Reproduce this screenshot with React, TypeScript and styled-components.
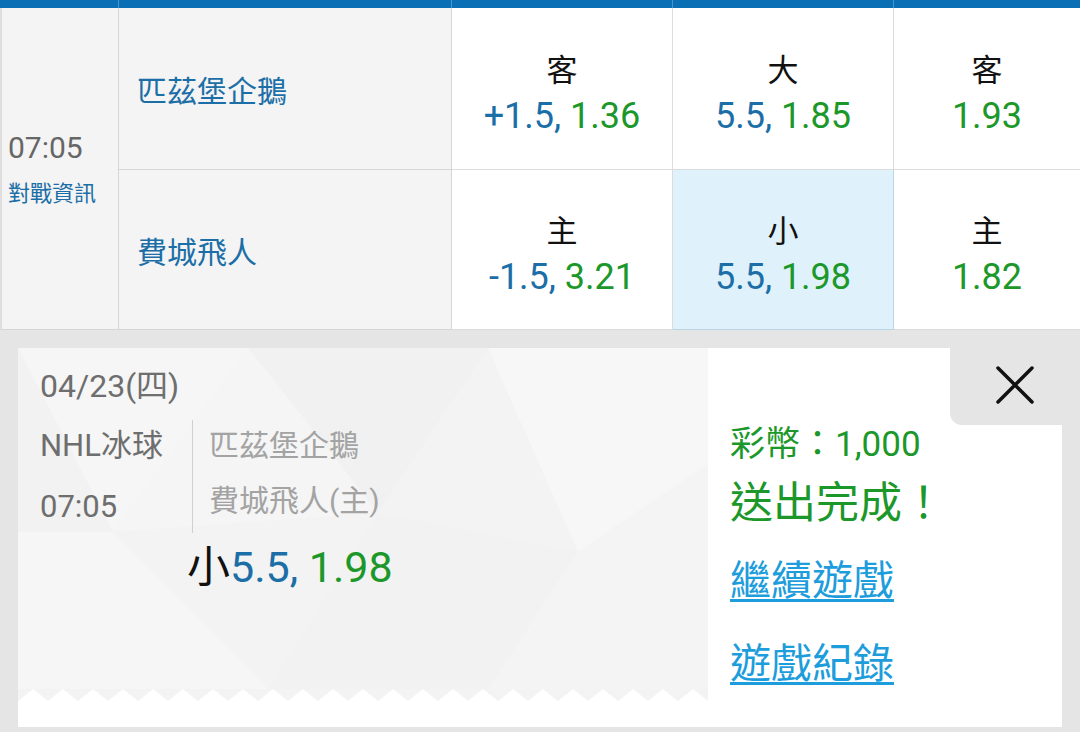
import styled, { createGlobalStyle } from "styled-components";

const GlobalStyle = createGlobalStyle`
  html, body {
    margin: 0;
    padding: 0;
    background: #e5e5e5;
  }
  body {
    width: 1080px;
    height: 732px;
    overflow: hidden;
    font-family: Roboto, "Noto Sans CJK TC", sans-serif;
  }
  * {
    box-sizing: border-box;
  }
`;

interface Odd {
  label: string;
  line?: string;
  price: string;
  active?: boolean;
}

const rows: { team: string; odds: Odd[] }[] = [
  {
    team: "匹茲堡企鵝",
    odds: [
      { label: "客", line: "+1.5", price: "1.36" },
      { label: "大", line: "5.5", price: "1.85" },
      { label: "客", price: "1.93" },
    ],
  },
  {
    team: "費城飛人",
    odds: [
      { label: "主", line: "-1.5", price: "3.21" },
      { label: "小", line: "5.5", price: "1.98", active: true },
      { label: "主", price: "1.82" },
    ],
  },
];

const App = () => {
  return (
    <Page>
      <GlobalStyle />
      <Table>
        {[0, 1, 2, 3, 4].map((i) => (
          <HeaderCell key={i} $last={i === 4} />
        ))}
        <TimeCell>
          <Time>07:05</Time>
          <InfoLink>對戰資訊</InfoLink>
        </TimeCell>
        {rows.map((row, r) => (
          <Row key={r}>
            <TeamCell>{row.team}</TeamCell>
            {row.odds.map((odd, c) => (
              <OddsCell key={c} $active={!!odd.active} $last={c === 2}>
                <OddsLabel>{odd.label}</OddsLabel>
                <OddsValue>
                  {odd.line && <Blue>{odd.line}, </Blue>}
                  <Green>{odd.price}</Green>
                </OddsValue>
              </OddsCell>
            ))}
          </Row>
        ))}
      </Table>

      <Card>
        <TicketPanel>
          <TicketBody>
            <Pattern viewBox="0 0 690 352" preserveAspectRatio="none">
              <polygon points="0,0 230,0 95,190" fill="#f6f6f6" />
              <polygon points="230,0 470,0 360,170" fill="#f1f1f1" />
              <polygon points="95,190 230,0 360,170" fill="#f5f5f5" />
              <polygon points="470,0 690,0 690,120 560,210" fill="#f7f7f7" />
              <polygon points="360,170 560,210 470,352 250,352" fill="#f2f2f2" />
              <polygon points="0,190 95,190 250,352 0,352" fill="#f6f6f6" />
              <polygon points="560,210 690,120 690,352 470,352" fill="#f4f4f4" />
              <polygon points="0,0 95,190 0,190" fill="#f2f2f2" />
            </Pattern>
            <TicketContent>
              <DateLine>04/23(四)</DateLine>
              <MatchRow>
                <LeagueCol>
                  <MetaText>NHL冰球</MetaText>
                  <MetaText>07:05</MetaText>
                </LeagueCol>
                <TeamsCol>
                  <TeamText>匹茲堡企鵝</TeamText>
                  <TeamText>費城飛人(主)</TeamText>
                </TeamsCol>
              </MatchRow>
              <Pick>
                <PickLabel>小</PickLabel>
                <Blue>5.5, </Blue>
                <Green>1.98</Green>
              </Pick>
            </TicketContent>
          </TicketBody>
          <ZigZag width="100%" height="12">
            <defs>
              <pattern id="zz" width="30" height="12" patternUnits="userSpaceOnUse">
                <path d="M0 12 L15 0 L30 12 Z" fill="#ffffff" />
              </pattern>
            </defs>
            <rect width="100%" height="12" fill="url(#zz)" />
          </ZigZag>
          <TicketFoot />
        </TicketPanel>

        <ResultPanel>
          <TopRow>
            <CloseTab>
              <svg width="40" height="40" viewBox="0 0 40 40">
                <path
                  d="M3 3 L37 37 M37 3 L3 37"
                  stroke="#111"
                  strokeWidth="3.5"
                  strokeLinecap="round"
                />
              </svg>
            </CloseTab>
          </TopRow>
          <Balance>彩幣：1,000</Balance>
          <Done>送出完成！</Done>
          <ActionLink $gap={24}>繼續遊戲</ActionLink>
          <ActionLink $gap={31}>遊戲紀錄</ActionLink>
        </ResultPanel>
      </Card>
    </Page>
  );
};

export default App;

const Page = styled.div`
  width: 1080px;
  height: 732px;
  background: #e5e5e5;
`;

const Table = styled.div`
  display: grid;
  grid-template-columns: 119px 333px 221px 221px 186px;
  grid-template-rows: 8px 162px 160px;
  background: #ffffff;
`;

const Row = styled.div`
  display: contents;
`;

const HeaderCell = styled.div<{ $last: boolean }>`
  background: #0b6fb6;
  border-right: ${({ $last }) => ($last ? "none" : "1px solid #4b95cf")};
`;

const TimeCell = styled.div`
  grid-row: 2 / span 2;
  grid-column: 1;
  background: #f4f4f4;
  border-left: 2px solid #dedede;
  border-right: 1px solid #d6d6d6;
  border-bottom: 1px solid #d6d6d6;
  display: flex;
  flex-direction: column;
  justify-content: center;
  padding-left: 6px;
`;

const Time = styled.div`
  font-size: 30px;
  line-height: 40px;
  color: #666666;
`;

const InfoLink = styled.div`
  font-size: 22px;
  line-height: 30px;
  margin-top: 11px;
  color: #1b6ea6;
`;

const TeamCell = styled.div`
  grid-column: 2;
  background: #f4f4f4;
  border-right: 1px solid #d6d6d6;
  border-bottom: 1px solid #d6d6d6;
  display: flex;
  align-items: center;
  padding-left: 18px;
  font-size: 30px;
  color: #1b6ea6;
`;

const OddsCell = styled.div<{ $active: boolean; $last: boolean }>`
  background: ${({ $active }) => ($active ? "#dff1fb" : "#ffffff")};
  border-right: ${({ $last, $active }) =>
    $last ? "none" : `1px solid ${$active ? "#b9d6e6" : "#dcdcdc"}`};
  border-bottom: 1px solid ${({ $active }) => ($active ? "#b9d6e6" : "#dcdcdc")};
  display: flex;
  flex-direction: column;
  align-items: center;
  justify-content: center;
  padding-top: 11px;
`;

const OddsLabel = styled.div`
  font-size: 31px;
  line-height: 44px;
  color: #111111;
`;

const OddsValue = styled.div`
  font-size: 36px;
  line-height: 46px;
`;

const Blue = styled.span`
  color: #1b6ea6;
`;

const Green = styled.span`
  color: #1c982a;
`;

const Card = styled.div`
  display: flex;
  margin: 18px 18px 0;
  height: 379px;
`;

const TicketPanel = styled.div`
  width: 690px;
  display: flex;
  flex-direction: column;
  background: #ffffff;
`;

const TicketBody = styled.div`
  position: relative;
  flex: 1;
  background: #f3f3f3;
  overflow: hidden;
`;

const Pattern = styled.svg`
  position: absolute;
  inset: 0;
  width: 100%;
  height: 100%;
`;

const TicketContent = styled.div`
  position: relative;
  padding: 18px 0 0 22px;
`;

const DateLine = styled.div`
  font-size: 32px;
  line-height: 40px;
  color: #6e6e6e;
`;

const MatchRow = styled.div`
  display: flex;
  margin-top: 14px;
`;

const LeagueCol = styled.div`
  width: 153px;
  display: flex;
  flex-direction: column;
  gap: 9px;
  border-right: 1px solid #cfcfcf;
`;

const MetaText = styled.div`
  font-size: 31px;
  line-height: 52px;
  color: #6e6e6e;
`;

const TeamsCol = styled.div`
  display: flex;
  flex-direction: column;
  gap: 3px;
  padding-left: 16px;
`;

const TeamText = styled.div`
  font-size: 30px;
  line-height: 52px;
  color: #a3a3a3;
`;

const Pick = styled.div`
  margin: 8px 0 0 147px;
  font-size: 43px;
  line-height: 52px;
`;

const PickLabel = styled.span`
  color: #111111;
`;

const ZigZag = styled.svg`
  display: block;
  background: #f3f3f3;
  flex-shrink: 0;
`;

const TicketFoot = styled.div`
  height: 26px;
  background: #ffffff;
`;

const ResultPanel = styled.div`
  width: 354px;
  background: #ffffff;
  display: flex;
  flex-direction: column;
  padding-left: 22px;
`;

const TopRow = styled.div`
  display: flex;
  justify-content: flex-end;
  height: 77px;
`;

const CloseTab = styled.div`
  width: 112px;
  height: 77px;
  background: #e5e5e5;
  border-bottom-left-radius: 12px;
  display: flex;
  align-items: center;
  justify-content: center;
  padding: 0 0 4px 18px;
`;

const Balance = styled.div`
  font-size: 35px;
  line-height: 40px;
  color: #1c982a;
`;

const Done = styled.div`
  margin-top: 10px;
  font-size: 43px;
  line-height: 56px;
  color: #1c982a;
`;

const ActionLink = styled.a<{ $gap: number }>`
  margin-top: ${({ $gap }) => $gap}px;
  font-size: 41px;
  line-height: 52px;
  color: #1d9ddb;
  text-decoration: underline;
  text-decoration-thickness: 3px;
  text-underline-offset: 4px;
  cursor: pointer;
`;
